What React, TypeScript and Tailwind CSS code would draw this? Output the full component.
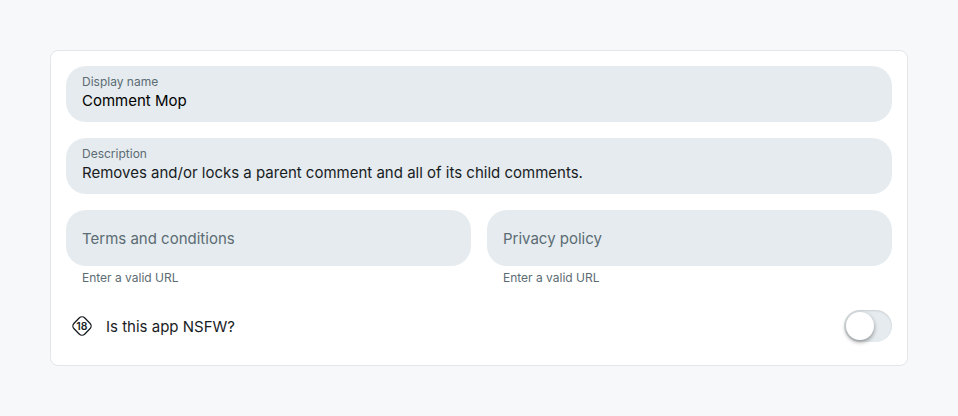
import { useId, useState } from "react";

type FieldProps = {
  label: string;
  initialValue?: string;
  hint?: string;
  type?: string;
  tone?: string;
};

function TextField({ label, initialValue = "", hint, type = "text", tone = "text-[#181c1f]" }: FieldProps) {
  const id = useId();
  const [value, setValue] = useState(initialValue);
  const filled = value !== "";

  return (
    <div className="min-w-0 flex-1">
      <div className={`grid h-14 content-center rounded-[20px] bg-[#e5ebee] px-4 ${filled ? "pb-0.5" : "pt-0.5"}`}>
        <label
          htmlFor={id}
          className={
            filled
              ? "text-xs leading-4 text-[#5c6c74]"
              : "col-start-1 row-start-1 text-[15px] leading-[22px] text-[#5c6c74]"
          }
        >
          {label}
        </label>
        <input
          id={id}
          type={type}
          value={value}
          onChange={(event) => setValue(event.target.value)}
          className={`h-[22px] w-full bg-transparent text-[15px] leading-[22px] outline-none ${filled ? "" : "col-start-1 row-start-1"} ${tone}`}
        />
      </div>
      {hint && <p className="mt-1 px-4 text-xs leading-4 text-[#5c6c74]">{hint}</p>}
    </div>
  );
}

function AgeIcon() {
  return (
    <svg viewBox="0 0 20 20" className="size-5" fill="none" aria-hidden="true">
      <rect x="2.4" y="2.4" width="15.2" height="15.2" rx="4" transform="rotate(45 10 10)" stroke="#181c1f" strokeWidth="1.3" />
      <text x="9.8" y="13.8" textAnchor="middle" fontSize="10.5" fontWeight="600" fill="#181c1f">
        18
      </text>
    </svg>
  );
}

export default function App() {
  const [nsfw, setNsfw] = useState(false);

  return (
    <main className="min-h-screen bg-[#f6f8fa] p-[50px] font-['Inter','Liberation_Sans',sans-serif]">
      <form className="rounded-lg border border-[#e4e6e8] bg-white p-[15px]">
        <div className="flex flex-col gap-4">
          <TextField label="Display name" initialValue="Comment Mop" tone="text-black" />
          <TextField label="Description" initialValue="Removes and/or locks a parent comment and all of its child comments." />
          <div className="flex gap-4">
            <TextField label="Terms and conditions" type="url" hint="Enter a valid URL" />
            <TextField label="Privacy policy" type="url" hint="Enter a valid URL" />
          </div>
        </div>
        <label className="mt-4 flex h-12 cursor-pointer items-center">
          <span className="flex w-8 justify-center">
            <AgeIcon />
          </span>
          <span className="ml-2 flex-1 pt-0.5 text-[15px] leading-[22px] text-[#181c1f]">Is this app NSFW?</span>
          <input
            type="checkbox"
            role="switch"
            checked={nsfw}
            onChange={(event) => setNsfw(event.target.checked)}
            className="h-8 w-12 cursor-pointer appearance-none rounded-full bg-[#e5ebee] p-0.5 shadow-[inset_0_1px_2px_rgba(0,0,0,0.12)] before:block before:size-7 before:rounded-full before:bg-white before:shadow-[0_2px_4px_rgba(0,0,0,0.4)] before:transition-transform checked:bg-[#0a449b] checked:before:translate-x-4"
          />
        </label>
      </form>
    </main>
  );
}
